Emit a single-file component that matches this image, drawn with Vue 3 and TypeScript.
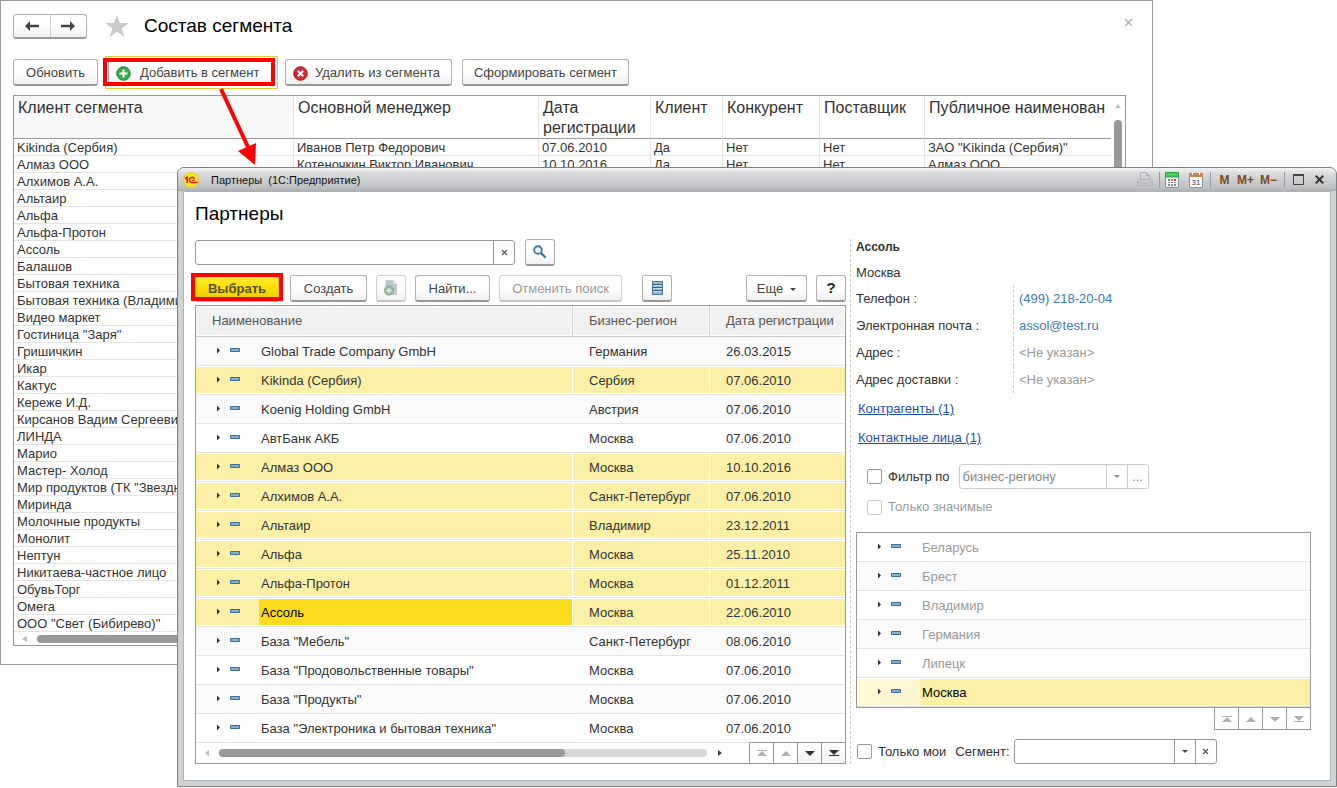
<script setup lang="ts">
import { ref } from 'vue'

interface SegmentRow {
  client: string
  manager?: string
  date?: string
  isClient?: string
  competitor?: string
  supplier?: string
  publicName?: string
}

interface Partner {
  name: string
  region: string
  date: string
  marked?: boolean
  current?: boolean
}

const segmentRows: SegmentRow[] = [
  { client: 'Kikinda (Сербия)', manager: 'Иванов Петр Федорович', date: '07.06.2010', isClient: 'Да', competitor: 'Нет', supplier: 'Нет', publicName: 'ЗАО "Kikinda (Сербия)"' },
  { client: 'Алмаз ООО', manager: 'Котеночкин Виктор Иванович', date: '10.10.2016', isClient: 'Да', competitor: 'Нет', supplier: 'Нет', publicName: 'Алмаз ООО' },
  ...[
    'Алхимов А.А.', 'Альтаир', 'Альфа', 'Альфа-Протон', 'Ассоль', 'Балашов', 'Бытовая техника',
    'Бытовая техника (Владимир)', 'Видео маркет', 'Гостиница "Заря"', 'Гришичкин', 'Икар', 'Кактус',
    'Кереже И.Д.', 'Кирсанов Вадим Сергеевич', 'ЛИНДА', 'Марио', 'Мастер- Холод',
    'Мир продуктов (ТК "Звездный")', 'Миринда', 'Молочные продукты', 'Монолит', 'Нептун',
    'Никитаева-частное лицо', 'ОбувьТорг', 'Омега', 'ООО "Свет (Бибирево)"',
  ].map((client) => ({ client })),
]

const partners: Partner[] = [
  { name: 'Global Trade Company GmbH', region: 'Германия', date: '26.03.2015' },
  { name: 'Kikinda (Сербия)', region: 'Сербия', date: '07.06.2010', marked: true },
  { name: 'Koenig Holding GmbH', region: 'Австрия', date: '07.06.2010' },
  { name: 'АвтБанк АКБ', region: 'Москва', date: '07.06.2010' },
  { name: 'Алмаз ООО', region: 'Москва', date: '10.10.2016', marked: true },
  { name: 'Алхимов А.А.', region: 'Санкт-Петербург', date: '07.06.2010', marked: true },
  { name: 'Альтаир', region: 'Владимир', date: '23.12.2011', marked: true },
  { name: 'Альфа', region: 'Москва', date: '25.11.2010', marked: true },
  { name: 'Альфа-Протон', region: 'Москва', date: '01.12.2011', marked: true },
  { name: 'Ассоль', region: 'Москва', date: '22.06.2010', marked: true, current: true },
  { name: 'База "Мебель"', region: 'Санкт-Петербург', date: '08.06.2010' },
  { name: 'База "Продовольственные товары"', region: 'Москва', date: '07.06.2010' },
  { name: 'База "Продукты"', region: 'Москва', date: '07.06.2010' },
  { name: 'База "Электроника и бытовая техника"', region: 'Москва', date: '07.06.2010' },
]

const regions = ['Беларусь', 'Брест', 'Владимир', 'Германия', 'Липецк', 'Москва']
const selectedRegion = ref('Москва')

const search = ref('')
const filterByRegion = ref(false)
const onlySignificant = ref(false)
const onlyMine = ref(false)

const navShapes = [
  { label: 'В начало', d: 'M1 1h10v1H1z M6 2l5 5H1z' },
  { label: 'Назад', d: 'M6 2l5 5H1z' },
  { label: 'Вперед', d: 'M1 2h10l-5 5z' },
  { label: 'В конец', d: 'M1 1h10l-5 5z M1 6h10v1H1z' },
]
</script>

<template>
  <main class="desktop">
    <section class="back">
      <header class="back-head">
        <div class="history">
          <button type="button" aria-label="Назад">
            <svg width="14" height="10" viewBox="0 0 14 10"><path d="M0 5l5-5v3.7h9v2.6H5V10z" fill="#444" /></svg>
          </button>
          <button type="button" aria-label="Вперед">
            <svg width="14" height="10" viewBox="0 0 14 10"><path d="M14 5L9 0v3.7H0v2.6h9V10z" fill="#444" /></svg>
          </button>
        </div>
        <svg class="star" width="24" height="22" viewBox="0 0 24 22"><path d="M12 0l2.9 8H24l-7.300 5.200L19.500 22 12 16.700 4.500 22l2.800-8.800L0 8h9.100z" fill="#c9cacc" /></svg>
        <h1>Состав сегмента</h1>
        <button type="button" class="close" aria-label="Закрыть">
          <svg width="9" height="9" viewBox="0 0 9 9"><path d="M1 1l7 7M8 1L1 8" stroke="#a8a8a8" stroke-width="1.100" /></svg>
        </button>
      </header>

      <div class="back-tools">
        <button type="button" class="btn refresh">Обновить</button>
        <div class="callout">
          <button type="button" class="btn wide-btn with-icon add">
            <svg width="15" height="15" viewBox="0 0 15 15"><circle cx="7.500" cy="7.500" r="6.800" fill="#35ab4b" stroke="#1f8a37" /><path d="M7.500 3.500v8M3.500 7.500h8" stroke="#fff" stroke-width="2" /></svg>
            Добавить в сегмент
          </button>
          <span class="focus-frame"></span>
          <span class="red-frame"></span>
          <svg class="arrow" width="42" height="80" viewBox="0 0 42 80"><path d="M5 3L32 61" stroke="#f00" stroke-width="4" /><path d="M22 65l18-8-1 22z" fill="#f00" /></svg>
        </div>
        <button type="button" class="btn wide-btn with-icon">
          <svg width="15" height="15" viewBox="0 0 15 15"><circle cx="7.500" cy="7.500" r="6.800" fill="#d9252b" stroke="#b5161c" /><path d="M4.800 4.800l5.400 5.400M10.200 4.800l-5.400 5.400" stroke="#fff" stroke-width="2" /></svg>
          Удалить из сегмента
        </button>
        <button type="button" class="btn wide-btn">Сформировать сегмент</button>
      </div>

      <div class="report">
        <div class="report-main">
          <table class="segment">
            <colgroup>
              <col class="w-client" /><col class="w-manager" /><col class="w-date" /><col class="w-is" />
              <col class="w-comp" /><col class="w-supp" /><col />
            </colgroup>
            <thead>
              <tr>
                <th>Клиент сегмента</th>
                <th>Основной менеджер</th>
                <th>Дата<br />регистрации</th>
                <th>Клиент</th>
                <th>Конкурент</th>
                <th>Поставщик</th>
                <th>Публичное наименован</th>
              </tr>
            </thead>
            <tbody>
              <tr v-for="row in segmentRows" :key="row.client">
                <td>{{ row.client }}</td>
                <td>{{ row.manager }}</td>
                <td>{{ row.date }}</td>
                <td>{{ row.isClient }}</td>
                <td>{{ row.competitor }}</td>
                <td>{{ row.supplier }}</td>
                <td>{{ row.publicName }}</td>
              </tr>
            </tbody>
          </table>
          <div class="hscroll">
            <svg width="5" height="6" viewBox="0 0 5 6"><path d="M5 0v6L0 3z" fill="#bbb" /></svg>
            <span class="thumb"></span>
          </div>
        </div>
        <div class="vscroll">
          <svg width="6" height="4" viewBox="0 0 6 4"><path d="M0 4h6L3 0z" fill="#bbb" /></svg>
          <span class="thumb"></span>
        </div>
      </div>
    </section>

    <section class="front">
      <header class="titlebar">
        <svg class="logo" width="16" height="16" viewBox="0 0 16 16">
          <circle cx="8" cy="8" r="7.700" fill="#fde22a" stroke="#e0b820" stroke-width=".6" />
          <path d="M2 6.800L4.200 5.300V11" fill="none" stroke="#d8201c" stroke-width="1.700" />
          <path d="M11.300 7A2.500 2.500 0 1 0 9 10.400H14.500" fill="none" stroke="#d8201c" stroke-width="1.500" />
          <path d="M9 8.300H12" fill="none" stroke="#d8201c" stroke-width="1" />
        </svg>
        <span class="caption">Партнеры&nbsp; (1С:Предприятие)</span>
        <button type="button" aria-label="Печать">
          <svg width="18" height="15" viewBox="0 0 18 15" fill="none" stroke="#a9b3bd"><path d="M4.500 7.500v-7h6l3 3v4M10.500.5v3h3M3 7.500h12l1.500 2v4h-15v-4zM2 10.500h4l1 1h4l1-1h4" /></svg>
        </button>
        <i class="sep tight"></i>
        <div class="tools wide">
          <button type="button" aria-label="Калькулятор">
            <svg width="14" height="16" viewBox="0 0 14 16"><path d="M.5.5h13v15H.5z" fill="#f2f4f3" stroke="#8b9590" /><path d="M.5.5h13v4.500H.5z" fill="#45cf5b" stroke="#3a9a4a" /><path d="M3 7h2v2H3zM6 7h2v2H6zM3 10h2v1H3zM6 10h2v1H6zM9 10h2v1H9zM3 12h2v2H3zM6 12h2v2H6zM9 12h2v2H9z" fill="#7e8a87" /><path d="M9 7h2v2H9z" fill="#e33" /></svg>
          </button>
          <button type="button" aria-label="Календарь">
            <svg width="14" height="16" viewBox="0 0 14 16"><path d="M.5 2.500h13v13H.5z" fill="#fff" stroke="#8a929c" /><path d="M0 1h14v4H0z" fill="#c78453" /><path d="M3 0h1v3H3zM10 0h1v3h-1z" fill="#fff" /><text x="7" y="13" text-anchor="middle" class="cal">31</text></svg>
          </button>
        </div>
        <i class="sep"></i>
        <div class="tools">
          <button type="button" class="mem single">M</button>
          <button type="button" class="mem">M+</button>
          <button type="button" class="mem">M−</button>
        </div>
        <i class="sep"></i>
        <div class="tools win">
          <button type="button" aria-label="Развернуть">
            <svg width="11" height="11" viewBox="0 0 11 11"><path d="M.5 1h10v9.500H.5z" fill="none" stroke="#444" /><path d="M0 0h11v2H0z" fill="#444" /></svg>
          </button>
          <button type="button" aria-label="Закрыть окно">
            <svg width="9" height="9" viewBox="0 0 9 9"><path d="M.8.800l7.400 7.400M8.200.800L.8 8.200" stroke="#333" stroke-width="2" /></svg>
          </button>
        </div>
      </header>

      <div class="client">
        <h2>Партнеры</h2>
        <div class="panes">
          <div class="list-pane">
            <div class="search-row">
              <div class="field search">
                <input v-model="search" type="text" aria-label="Поиск" />
                <button type="button" aria-label="Очистить">
                  <svg width="7" height="7" viewBox="0 0 7 7"><path d="M1 1l5 5M6 1L1 6" stroke="#555" stroke-width="1.200" /></svg>
                </button>
              </div>
              <button type="button" class="btn square" aria-label="Найти">
                <svg width="14" height="14" viewBox="0 0 14 14"><circle cx="5" cy="5" r="3.800" fill="none" stroke="#2f74ad" stroke-width="1.900" /><path d="M8 8l4.500 4.500" stroke="#2f74ad" stroke-width="2.400" /></svg>
              </button>
            </div>

            <div class="commands">
              <div class="callout choose">
                <button type="button" class="btn primary">Выбрать</button>
                <span class="red-frame"></span>
              </div>
              <button type="button" class="btn create">Создать</button>
              <button type="button" class="btn square" disabled aria-label="Создать копированием">
                <svg width="14" height="16" viewBox="0 0 14 16"><path d="M1.500 0h8L13 4v11H1.500z" fill="#bcc7cf" /><path d="M9.500 0v4H13z" fill="#e3e8eb" /><circle cx="5" cy="10.500" r="4.500" fill="#9dbb9f" stroke="#86a889" /><path d="M5 8v5M2.500 10.500h5" stroke="#e9f0e9" stroke-width="1.400" /></svg>
              </button>
              <button type="button" class="btn find">Найти...</button>
              <button type="button" class="btn cancel" disabled>Отменить поиск</button>
              <button type="button" class="btn square list" aria-label="Настройка списка">
                <svg width="11" height="14" viewBox="0 0 11 14"><path d="M.5.5h10v13H.5z" fill="#8fb7d6" stroke="#4f7797" /><path d="M1 3.500h9M1 6.500h9M1 9.500h9" stroke="#3f6481" /><path d="M1 4.500h9M1 7.500h9M1 10.500h9" stroke="#c4dbea" /></svg>
              </button>
              <button type="button" class="btn more">
                Еще
                <svg width="6" height="3" viewBox="0 0 6 3"><path d="M0 0h6L3 3z" fill="#444" /></svg>
              </button>
              <button type="button" class="btn square help">?</button>
            </div>

            <div class="list-box">
              <table class="partners">
                <colgroup><col /><col class="w-region" /><col class="w-reg-date" /></colgroup>
                <thead>
                  <tr><th>Наименование</th><th>Бизнес-регион</th><th>Дата регистрации</th></tr>
                </thead>
                <tbody>
                  <tr v-for="p in partners" :key="p.name" :class="{ marked: p.marked, current: p.current }">
                    <td class="tree-cell">
                      <div class="node">
                        <svg width="25" height="8" viewBox="0 0 25 8"><path d="M1 1.500v6L4 4.500z" fill="#333" /><path d="M14.500 2.500h9v3h-9z" fill="#7fb4d8" stroke="#3f6d90" /></svg>
                        <span>{{ p.name }}</span>
                      </div>
                    </td>
                    <td>{{ p.region }}</td>
                    <td>{{ p.date }}</td>
                  </tr>
                </tbody>
              </table>
              <div class="list-foot">
                <svg width="4" height="6" viewBox="0 0 4 6"><path d="M4 0v6L0 3z" fill="#bbb" /></svg>
                <span class="track"><span class="thumb"></span></span>
                <svg width="4" height="6" viewBox="0 0 4 6"><path d="M0 0v6l4-3z" fill="#444" /></svg>
                <div class="pager">
                  <button v-for="(s, i) in navShapes" :key="s.label" type="button" :aria-label="s.label" :disabled="i < 2">
                    <svg width="12" height="8" viewBox="0 0 12 8"><path :d="s.d" /></svg>
                  </button>
                </div>
              </div>
            </div>
          </div>

          <aside class="info-pane">
            <strong>Ассоль</strong>
            <p class="city">Москва</p>
            <dl>
              <dt>Телефон :</dt><dd><a href="#phone">(499) 218-20-04</a></dd>
              <dt>Электронная почта :</dt><dd><a href="#mail">assol@test.ru</a></dd>
              <dt>Адрес :</dt><dd>&lt;Не указан&gt;</dd>
              <dt>Адрес доставки :</dt><dd>&lt;Не указан&gt;</dd>
            </dl>
            <nav class="links">
              <a href="#contractors">Контрагенты (1)</a>
              <a href="#contacts">Контактные лица (1)</a>
            </nav>

            <div class="filter">
              <label class="check"><input v-model="filterByRegion" type="checkbox" />Фильтр по</label>
              <div class="field off">
                <select disabled aria-label="Поле фильтра"><option>бизнес-региону</option></select>
                <span class="drop"><svg width="6" height="3" viewBox="0 0 6 3"><path d="M0 0h6L3 3z" fill="#888" /></svg></span>
                <button type="button" disabled>...</button>
              </div>
            </div>
            <label class="check significant"><input v-model="onlySignificant" type="checkbox" disabled />Только значимые</label>

            <table class="regions">
              <tbody>
                <tr v-for="r in regions" :key="r" :class="{ chosen: r === selectedRegion }" @click="selectedRegion = r">
                  <td class="tree-cell">
                    <div class="node">
                      <svg width="25" height="8" viewBox="0 0 25 8"><path d="M1 1.500v6L4 4.500z" fill="#333" /><path d="M14.500 2.500h9v3h-9z" fill="#7fb4d8" stroke="#3f6d90" /></svg>
                      <span>{{ r }}</span>
                    </div>
                  </td>
                </tr>
              </tbody>
            </table>
            <div class="pager side">
              <button v-for="s in navShapes" :key="s.label" type="button" :aria-label="s.label" disabled>
                <svg width="12" height="8" viewBox="0 0 12 8"><path :d="s.d" /></svg>
              </button>
            </div>

            <div class="bottom">
              <label class="check"><input v-model="onlyMine" type="checkbox" />Только мои</label>
              <label for="segment">Сегмент:</label>
              <div class="field segment-field">
                <select id="segment"><option></option></select>
                <span class="drop"><svg width="6" height="3" viewBox="0 0 6 3"><path d="M0 0h6L3 3z" fill="#444" /></svg></span>
                <button type="button" aria-label="Очистить сегмент">
                  <svg width="7" height="7" viewBox="0 0 7 7"><path d="M1 1l5 5M6 1L1 6" stroke="#555" stroke-width="1.200" /></svg>
                </button>
              </div>
            </div>
          </aside>
        </div>
      </div>
    </section>
  </main>
</template>

<style>
body {
  margin: 0;
  background: #fff;
}
</style>

<style scoped>
* {
  box-sizing: border-box;
}
.desktop {
  display: grid;
  font: 13px/16px "Liberation Sans", Arial, sans-serif;
  color: #333;
}
button,
input,
select {
  font: inherit;
  color: inherit;
  margin: 0;
}
button {
  padding: 0;
  border: 0;
  background: none;
  white-space: nowrap;
}
svg {
  display: block;
  flex: none;
}
h1,
h2 {
  margin: 0;
  font-weight: 400;
  font-size: 19px;
  line-height: 24px;
  color: #000;
}
table {
  border-collapse: separate;
  border-spacing: 0;
  table-layout: fixed;
  width: 100%;
}
th,
td {
  padding: 0;
  text-align: left;
  font-weight: 400;
  white-space: nowrap;
  overflow: hidden;
}

/* segment window */
.back {
  grid-area: 1 / 1;
  align-self: start;
  margin-right: 184px;
  padding: 12px 26px 18px 12px;
  border: 1px solid #9a9a9a;
}
.back-head {
  display: flex;
  align-items: center;
  height: 26px;
}
.history {
  display: flex;
  width: 74px;
  height: 25px;
  border: 1px solid #b0b0b0;
  border-bottom: 2px solid #999;
  border-radius: 3px;
  background: linear-gradient(#fff 50%, #f0f0f0);
}
.history button {
  flex: 1;
  display: grid;
  place-items: center;
}
.history button + button {
  border-left: 1px solid #ccc;
}
.star {
  margin: 0 15px 0 18px;
}
.close {
  display: grid;
  place-items: center;
  margin: 0 -12px 8px auto;
  width: 20px;
  height: 16px;
}
.back-tools {
  display: flex;
  gap: 10px;
  margin: 20px 0 9px;
}
.btn {
  display: flex;
  align-items: center;
  justify-content: center;
  height: 27px;
  padding: 2px 0 0;
  border: 1px solid #b0b0b0;
  border-bottom: 2px solid #999;
  border-radius: 3px;
  background: linear-gradient(#fff 50%, #f0f0f0);
  color: #444;
}
.refresh {
  width: 85px;
}
.wide-btn {
  width: 167px;
}
.with-icon {
  justify-content: flex-start;
  padding-left: 7px;
  gap: 7px;
}
.callout {
  position: relative;
}
.add {
  gap: 9px;
}
.red-frame {
  position: absolute;
  inset: -1px 0 0 -5px;
  border: 4px solid #f00;
  pointer-events: none;
}
.focus-frame {
  position: absolute;
  inset: -3px;
  border: 1px solid #f3c73b;
  pointer-events: none;
}
.arrow {
  position: absolute;
  left: 108px;
  top: 27px;
  pointer-events: none;
}
.report {
  display: flex;
  border: 1px solid #9a9a9a;
}
.report-main {
  flex: 1;
  min-width: 0;
}
.segment th {
  height: 43px;
  padding: 2px 4px 0;
  vertical-align: top;
  font-size: 16px;
  line-height: 20px;
  border-bottom: 1px solid #9a9a9a;
  border-right: 1px solid #e4e4e4;
}
.segment th:first-child {
  background: #f8f8f8;
}
.segment th:last-child,
.segment td:last-child {
  border-right: 0;
}
.segment td {
  height: 17px;
  padding: 2px 3px 0;
  line-height: 14px;
  border-bottom: 1px solid #e4e4e4;
  border-right: 1px solid #e4e4e4;
}
.w-client { width: 280px; }
.w-manager { width: 245px; }
.w-date { width: 112px; }
.w-is { width: 72px; }
.w-comp { width: 97px; }
.w-supp { width: 105px; }
.hscroll {
  display: flex;
  align-items: center;
  gap: 10px;
  height: 13px;
  padding-left: 8px;
}
.hscroll .thumb {
  flex: 1;
  height: 8px;
  border-radius: 4px;
  background: #999;
}
.vscroll {
  display: flex;
  flex-direction: column;
  align-items: center;
  gap: 12px;
  width: 14px;
  padding-top: 8px;
}
.vscroll .thumb {
  width: 8px;
  height: 300px;
  border-radius: 4px;
  background: #999;
}

/* partners window */
.front {
  grid-area: 1 / 1;
  z-index: 1;
  margin: 167px 0 0 177px;
  padding: 0 5px 5px;
  border: 1px solid #808080;
  border-radius: 7px 7px 0 0;
  background: #d0d2d3;
}
.titlebar {
  display: flex;
  align-items: center;
  height: 23px;
  margin: 0 -5px;
  padding: 0 10px 0 5px;
  border-radius: 6px 6px 0 0;
  background: linear-gradient(#f4f4f4, #d9dadb 25%, #bfc0c2 85%, #adafb2);
}
.logo {
  margin-right: 12px;
}
.caption {
  font-size: 11px;
  color: #111;
  margin-right: auto;
}
.titlebar button {
  display: grid;
  place-items: center;
  height: 18px;
}
.sep {
  width: 1px;
  height: 16px;
  margin: 0 7px;
  background: #9b9ea1;
}
.sep.tight {
  margin: 0 5px;
}
.tools {
  display: flex;
  gap: 6px;
}
.tools.wide {
  gap: 10px;
}
.tools.win {
  gap: 8px;
}
.win button {
  width: 13px;
}
.titlebar .mem {
  width: 17px;
  font-size: 12px;
  font-weight: 700;
  color: #7b4a24;
}
.titlebar .single {
  width: 13px;
}
.cal {
  font: 8px "Liberation Sans", Arial, sans-serif;
  fill: #444;
}
.client {
  padding: 10px 19px 16px 11px;
  border: 1px solid #aeb4b6;
  background: #fff;
}
.panes {
  display: grid;
  grid-template-columns: minmax(0, 651fr) minmax(0, 461fr);
  gap: 4px;
  margin-top: 13px;
}
.search-row {
  display: flex;
  align-items: center;
  gap: 10px;
}
.field {
  display: flex;
  height: 25px;
  border: 1px solid #999;
  border-radius: 3px;
  background: #fff;
  overflow: hidden;
}
.field input,
.field select {
  flex: 1;
  min-width: 0;
  padding: 0 3px;
  border: 0;
  outline: 0;
  background: none;
  appearance: none;
  opacity: 1;
}
.field button,
.drop {
  display: grid;
  place-items: center;
  width: 21px;
  border-left: 1px solid #999;
}
.search {
  width: 320px;
}
.btn.square {
  width: 30px;
  padding: 0;
}
.btn:disabled {
  color: #999;
  border-color: #d0d0d0;
  border-bottom-color: #c4c4c4;
}
.commands {
  display: flex;
  margin: 9px 0 3px;
}
.commands > .btn {
  margin-right: 9px;
}
.choose {
  margin-right: 11px;
}
.choose .red-frame {
  inset: -2px -4px 1px -4px;
}
.btn.primary {
  width: 84px;
  border-color: #e0c000;
  border-bottom-color: #bbb;
  background: linear-gradient(#ffea3a, #ffe000 50%, #e8c800);
  font-weight: 700;
  color: #555027;
}
.create {
  width: 77px;
}
.find {
  width: 75px;
}
.cancel {
  width: 123px;
}
.commands > .list {
  margin: 0 auto 0 11px;
}
.more {
  width: 61px;
  gap: 7px;
}
.commands > .help {
  margin-right: 0;
  font-size: 15px;
  font-weight: 700;
  color: #222;
}
.list-box {
  border: 1px solid #999;
}
.partners th {
  height: 31px;
  padding: 0 0 0 16px;
  background: #f1f1f1;
  border-bottom: 1px solid #ccc;
  border-left: 1px solid #ccc;
  box-shadow: inset 1px 1px #fff, inset -1px -1px #fff;
  color: #555;
}
.partners th:first-child {
  border-left: 0;
}
.w-region { width: 137px; }
.w-reg-date { width: 136px; }
.partners td {
  height: 29px;
  padding: 2px 0 0 17px;
  border-bottom: 1px solid #e3e3e3;
}
.partners tr:nth-child(odd) td {
  background: #fafafa;
}
.partners .marked td,
.partners .marked:nth-child(odd) td {
  background: #fcf0a7;
  box-shadow: inset 0 1px #fff, inset 0 -1px #fff, inset 1px 0 #fff;
}
.partners .marked td:first-child,
.partners .marked:nth-child(odd) td:first-child {
  box-shadow: inset 0 1px #fff, inset 0 -1px #fff;
}
.partners .tree-cell,
.regions .tree-cell {
  padding: 1px 0 1px 20px;
}
.node {
  display: flex;
  align-items: center;
  height: 26px;
}
.node svg {
  margin: 0 18px 2px 0;
}
.node span {
  flex: 1;
  height: 26px;
  padding-left: 2px;
  line-height: 28px;
}
.current .node span {
  background: #fcdb1f;
  color: #000;
}
.list-foot {
  display: flex;
  align-items: center;
  height: 20px;
  padding-left: 9px;
}
.track {
  flex: 1;
  height: 8px;
  margin: 0 11px 0 10px;
  border-radius: 4px;
  background: #d6d6d6;
}
.track .thumb {
  display: block;
  width: 71%;
  height: 8px;
  border-radius: 4px;
  background: #999;
}
.pager {
  display: flex;
  height: 22px;
}
.pager button {
  display: grid;
  place-items: center;
  width: 24px;
  border-left: 1px solid #999;
  background: linear-gradient(#fff, #f2f2f2);
  fill: #333;
}
.pager button:disabled {
  background: #fff;
  fill: #b0b0b0;
}
.list-foot .pager {
  align-self: flex-end;
  height: 21px;
  margin-left: 27px;
  border-top: 1px solid #999;
}

/* details */
.info-pane {
  display: flex;
  flex-direction: column;
  padding-left: 5px;
  border-left: 1px dashed #ccc;
}
.info-pane strong {
  font-size: 12px;
}
.city {
  margin: 10px 0 4px;
}
dl {
  display: grid;
  grid-template-columns: 157px 1fr;
  margin: 0;
  line-height: 27px;
}
dd {
  margin: 0;
  padding-left: 5px;
  border-left: 1px dashed #ccc;
  color: #999;
}
dd a {
  color: #3b79b5;
  text-decoration: none;
}
.links {
  display: flex;
  flex-direction: column;
  align-items: flex-start;
  gap: 13px;
  margin: 8px 0 18px 2px;
}
.links a {
  color: #1d50b4;
}
.filter {
  display: flex;
  align-items: center;
  gap: 9px;
  padding-left: 11px;
}
.check {
  display: flex;
  align-items: center;
  gap: 6px;
}
.check input {
  appearance: none;
  width: 15px;
  height: 15px;
  border: 1px solid #999;
  border-radius: 2px;
  background: #fff;
}
.check input:disabled {
  border-color: #ccc;
}
.significant {
  margin: 10px 0 17px 11px;
  color: #999;
}
.off {
  width: 190px;
  border-color: #ccc;
  color: #888;
}
.off button,
.off .drop {
  border-color: #ccc;
}
.regions {
  border: 1px solid #999;
}
.regions td {
  height: 29px;
  border-bottom: 1px solid #e3e3e3;
  color: #999;
}
.regions tr:nth-child(even) td {
  background: #fafafa;
}
.regions .chosen td,
.regions .chosen:nth-child(even) td {
  background: #fdf7d3;
  box-shadow: inset 0 1px #fff, inset 0 -1px #fff;
}
.chosen .node span {
  background: #fcf0a7;
  color: #000;
}
.side {
  align-self: flex-end;
  border: 1px solid #999;
  border-width: 0 1px 1px 0;
}
.bottom {
  display: flex;
  align-items: center;
  gap: 9px;
  margin-top: 9px;
  padding-left: 1px;
}
.bottom > label:nth-child(2) {
  margin-right: -5px;
}
.segment-field {
  width: 203px;
}
</style>
